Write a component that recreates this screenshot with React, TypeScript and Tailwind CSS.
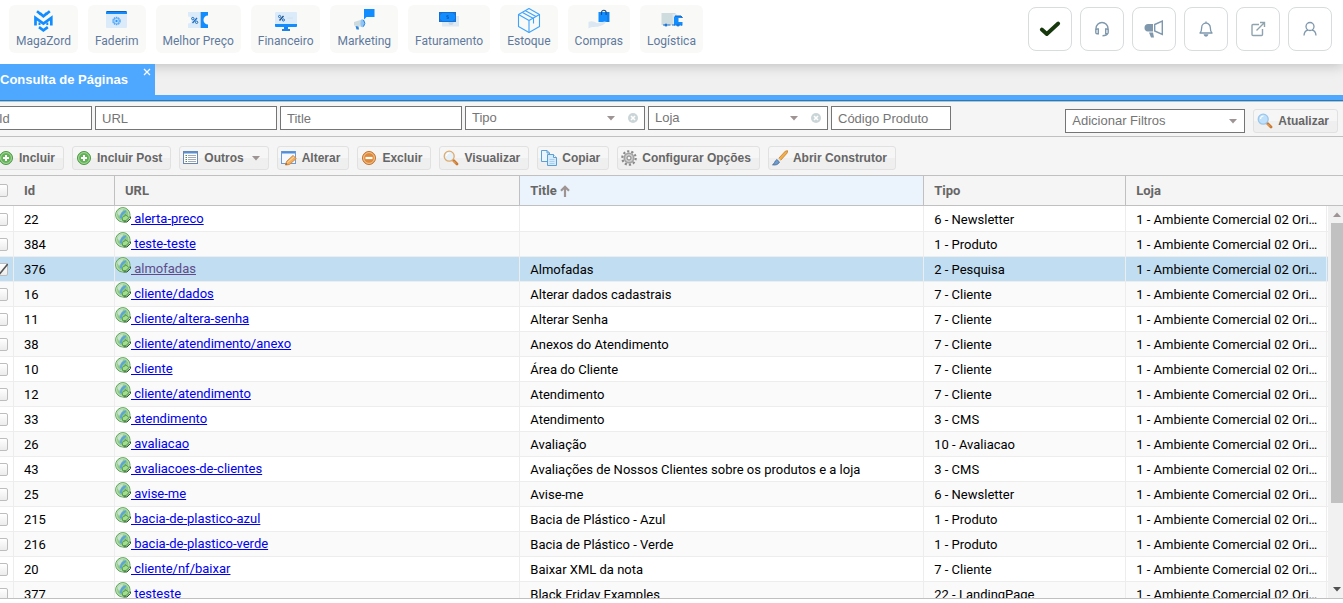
import React, { useState } from "react";

type IconProps = { className?: string };

/* ---------- module icons ---------- */

const MagazordIcon = () => (
  <svg width="32" height="26" viewBox="0 0 32 26" fill="none" stroke="#118dff" strokeWidth="2.700">
    <path d="M10 3.200 L13.800 6.200 M22.800 3.200 L19 6.200" />
    <path d="M13 5.400 L16.400 8.200 L19.800 5.400" />
    <path d="M8.500 17.500 V9.800 L16.400 15.500 L24.300 9.800 V17.500" />
    <path d="M12.500 17 V14.500 M20.300 17 V14.500" strokeWidth="2" />
    <path d="M12 19.200 L16.400 22.300 L20.800 19.200" />
  </svg>
);

const FaderimIcon = () => (
  <svg width="32" height="26" viewBox="0 0 32 26" fill="none">
    <rect x="5" y="3" width="21" height="17" rx="1" fill="#dcebf9" />
    <path d="M5 6 V4 a1 1 0 0 1 1-1 H25 a1 1 0 0 1 1 1 V6Z" fill="#118dff" />
    <path d="M6 3.500 H25" stroke="#1d5fae" />
    <circle cx="15.500" cy="13" r="3.500" stroke="#4aa5fb" strokeWidth="1.500" strokeDasharray="1.600 .6" />
    <circle cx="15.500" cy="13" r="2.600" stroke="#6db6fb" />
    <circle cx="15.500" cy="13" r="1.200" fill="#2b96ff" />
  </svg>
);

const PrecoIcon = () => (
  <svg width="32" height="26" viewBox="0 0 32 26" fill="none">
    <path d="M6 4 H19 V20 H6 V15.500 a3.500 3.500 0 0 0 0-7Z" fill="#dcebf9" />
    <path d="M18.500 4 V20" stroke="#a9c4dc" />
    <path d="M19 4 H26 V7.500 a4.500 4.500 0 0 0 0 9 V20 H19Z" fill="#118dff" />
    <path d="M15 10 L10.500 15" stroke="#1d6fc4" strokeWidth="1.300" />
    <circle cx="10.800" cy="10.600" r="1.200" stroke="#1d6fc4" />
    <circle cx="14.600" cy="14.300" r="1.200" stroke="#1d6fc4" />
  </svg>
);

const FinanceiroIcon = () => (
  <svg width="32" height="26" viewBox="0 0 32 26" fill="none">
    <rect x="5" y="4" width="22" height="15" rx="1" fill="#dcebf9" />
    <path d="M5 16 H27 V18 a1 1 0 0 1-1 1 H6 a1 1 0 0 1-1-1Z" fill="#118dff" />
    <path d="M14 19 H18 V21 H20 V23 H12 V21 H14Z" fill="#1c83e6" />
    <path d="M13.500 8 L9.500 12.500" stroke="#1d4f86" strokeWidth="1.300" />
    <circle cx="9.600" cy="8.500" r="1.100" stroke="#1d6fc4" />
    <circle cx="13.400" cy="12" r="1.100" stroke="#1d6fc4" />
    <path d="M17.500 10 H23" stroke="#cfe0ef" />
  </svg>
);

const MarketingIcon = () => (
  <svg width="32" height="26" viewBox="0 0 32 26" fill="none">
    <path d="M16 1 H26.500 V9 H18.500 L16 11.500Z" fill="#118dff" />
    <path d="M6 14 L14 11.500 V19 L6 17.500Z" fill="#cddbdf" />
    <ellipse cx="14.500" cy="15.300" rx="2" ry="4" fill="#8ec4f5" />
    <path d="M15.500 12 a5 5 0 0 1 0 6.500" stroke="#1c83e6" />
    <path d="M7.500 18 L8.500 21.500 H11 L10.500 18.500Z" fill="#2a86dd" />
  </svg>
);

const FaturamentoIcon = () => (
  <svg width="32" height="26" viewBox="0 0 32 26" fill="none">
    <rect x="9" y="8" width="17" height="10.500" fill="#dfe9f3" />
    <circle cx="18" cy="14.500" r="2.500" fill="#c7d6e6" />
    <rect x="6.500" y="4.500" width="16" height="9" fill="#118dff" stroke="#1b6dca" />
    <path d="M6.500 7 L9 4.500 M20 4.500 L22.500 7 M6.500 11 L9 13.500 M20 13.500 L22.500 11" stroke="#1b6dca" />
    <path d="M15.500 7.700 h-1.700 v1.300 h1.700 v1.400 h-1.800" stroke="#1457a5" strokeWidth=".8" />
  </svg>
);

const EstoqueIcon = () => (
  <svg width="32" height="26" viewBox="0 0 32 26" fill="none" stroke="#3fa3fb" strokeWidth="1.100" strokeLinejoin="round">
    <path d="M16 .6 L26.500 6.500 V18.500 L16 24.400 L5.500 18.500 V6.500Z" />
    <path d="M5.500 6.500 L16 12.500 L26.500 6.500 M16 12.500 V24.400" />
    <path d="M9.500 4.500 L20.500 10.500 V15.500 M12.500 2.700 L23 8.500" />
  </svg>
);

const ComprasIcon = () => (
  <svg width="32" height="26" viewBox="0 0 32 26" fill="none">
    <rect x="15.500" y="4" width="11" height="10" fill="#118dff" />
    <path d="M25 4 V14" stroke="#1b6dca" />
    <path d="M18.500 7 V4.500 a2.300 2.300 0 0 1 4.600 0 V7" stroke="#184a85" strokeWidth="1.100" />
    <path d="M5.500 14 C9 12.500 11 14 14 15 L22 13.500 C24 13.500 22 16.500 17 18 C13 19.500 9 18 5.500 20.500Z" fill="#dbe7f2" />
  </svg>
);

const LogisticaIcon = () => (
  <svg width="32" height="26" viewBox="0 0 32 26" fill="none">
    <rect x="5.500" y="5" width="14" height="12" fill="#cfdcdf" />
    <path d="M16.500 6 H21 L19.500 16 H17" fill="#dce9f5" />
    <path d="M19 8 H25 L26.500 10 H22.500 V14 H26.500 V17.500 H18 V9Z" fill="#118dff" />
    <path d="M19 8 H25 L26.500 10" stroke="#1b5fb0" />
    <path d="M7 17 H26" stroke="#1b6dca" strokeDasharray="3 1.500" />
    <circle cx="10" cy="17" r="1.500" fill="#1b78d8" />
    <circle cx="22" cy="17" r="1.500" fill="#1b78d8" />
  </svg>
);

/* ---------- toolbar icons ---------- */

const AddIcon = () => (
  <svg width="16" height="16" viewBox="0 0 16 16">
    <circle cx="8" cy="8" r="6.500" fill="#63b257" stroke="#4c9a42" />
    <circle cx="8" cy="8" r="5.400" fill="none" stroke="#a8dba0" />
    <path d="M8 5 V11 M5 8 H11" stroke="#fff" strokeWidth="2" />
  </svg>
);

const RemoveIcon = () => (
  <svg width="16" height="16" viewBox="0 0 16 16">
    <circle cx="8" cy="8" r="6.500" fill="#de8a3c" stroke="#c0732f" />
    <circle cx="8" cy="8" r="5.400" fill="none" stroke="#f3c795" />
    <path d="M4.500 8 H11.500" stroke="#fff" strokeWidth="2.200" />
  </svg>
);

const ListIcon = () => (
  <svg width="16" height="16" viewBox="0 0 16 16">
    <rect x=".5" y="1.500" width="14" height="12" fill="#fff" stroke="#6b87ad" />
    <path d="M1 2.500 H14" stroke="#5b8fd0" strokeWidth="2" />
    <path d="M2.500 5.500 H4 M2.500 7.500 H4 M2.500 9.500 H4 M2.500 11.500 H4" stroke="#4f8a5b" />
    <path d="M5 5.500 H13 M5 7.500 H13 M5 9.500 H13 M5 11.500 H13" stroke="#a2abb5" />
  </svg>
);

const EditIcon = () => (
  <svg width="16" height="16" viewBox="0 0 16 16">
    <rect x=".5" y="1.500" width="14" height="12" fill="#f4f9ff" stroke="#6f9bd1" />
    <path d="M1 2.500 H14" stroke="#4f8fdc" strokeWidth="2" />
    <path d="M4.500 15 L5.500 11.500 L12 5.500 L15.300 8.500 L8.500 14.500Z" fill="#f3ad5c" stroke="#d28a42" />
    <path d="M6.500 12.500 L13 6.800" stroke="#ffe0ac" />
    <path d="M4.500 15 L5 13 L6.500 14.300Z" fill="#8a5a30" />
  </svg>
);

const MagnifierIcon = ({ warm = false }: { warm?: boolean }) => (
  <svg width="16" height="16" viewBox="0 0 16 16">
    <path d="M10.500 10.500 L14 14" stroke="#c9792f" strokeWidth="2.800" strokeLinecap="round" />
    <path d="M10.500 11 L13 13.500" stroke="#efb06c" />
    <circle cx="6.200" cy="6.200" r="5" fill={warm ? "#e6f1fa" : "#bfe0fa"} stroke={warm ? "#dfab6d" : "#9cc6ea"} strokeWidth="1.300" />
    <path d="M3.500 6 a3 3 0 0 1 3-3" fill="none" stroke="#fff" strokeWidth="1.200" />
  </svg>
);

const CopyIcon = () => (
  <svg width="16" height="16" viewBox="0 0 16 16" stroke="#5b9fd4">
    <path d="M.5 .5 H6 L8.500 3 V11.500 H.5Z" fill="#eaf5fd" />
    <path d="M6 .5 V3 H8.500" fill="none" />
    <path d="M6.500 4.500 H12.500 L15.500 7.500 V15.500 H6.500Z" fill="#d5eafa" />
    <path d="M12.500 4.500 V7.500 H15.500" fill="#fff" />
    <path d="M8.500 9.500 H13.500 M8.500 11.500 H13.500 M8.500 13.500 H13.500" stroke="#a9d1ef" />
  </svg>
);

const GearIcon = () => (
  <svg width="16" height="16" viewBox="0 0 16 16" fill="none">
    <circle cx="8" cy="8" r="6.700" stroke="#8a8a8a" strokeWidth="2.200" strokeDasharray="2.200 2.010" />
    <circle cx="8" cy="8" r="4.700" fill="#cbcbcb" stroke="#a3a3a3" strokeWidth="1.600" />
    <circle cx="8" cy="8" r="2" fill="#f5f5f5" stroke="#858585" />
  </svg>
);

const BrushIcon = () => (
  <svg width="16" height="16" viewBox="0 0 16 16">
    <path d="M6.500 8.500 L13.500 1 L15.800 .8 L15 3.200 L8.500 10.500Z" fill="#f2b04c" stroke="#c57e29" strokeWidth=".8" />
    <path d="M5.500 8.800 L8.200 11.200" stroke="#e9e9e9" strokeWidth="2" />
    <path d="M.5 14.800 C2.500 14 2.500 11 4.800 9.500 L7.500 12 C6.500 14.500 3.500 15.500 .5 14.800Z" fill="#6b9bd0" stroke="#41668f" strokeWidth=".8" />
  </svg>
);

const GlobeIcon = () => (
  <svg width="16" height="16" viewBox="0 0 16 16">
    <circle cx="7.800" cy="7.800" r="7.200" fill="#8fc98a" stroke="#5fa65b" />
    <circle cx="7.800" cy="7.800" r="6.200" fill="none" stroke="#c9e8c2" strokeWidth=".9" />
    <path d="M2.500 6 C4 2.800 6.500 2 8.500 2.500 L6.500 5.500 L4 9Z" fill="#c7e3cf" />
    <path d="M11.500 3.500 C9 3.200 6 5.500 5.500 8 L4.500 10.500 L7 12 L7.200 8.500 L10.500 5.500Z" fill="#5ba3da" />
    <path d="M7.500 13.500 V11.500 C7.500 9.800 8.500 9 10.200 9 V7.500 L14 10.500 L11 13.500Z" fill="#a5dd8e" stroke="#4f9a48" strokeWidth=".9" />
    <path d="M15.500 9.500 V11.500 L12 15 H8.500" fill="none" stroke="#2c5a2b" />
  </svg>
);

/* ---------- header action icons ---------- */

const CheckIcon = () => (
  <svg width="22" height="18" viewBox="0 0 22 18" fill="none">
    <path d="M2.800 9.500 L7.800 14 L19.200 3.500" stroke="#17380c" strokeWidth="3.800" strokeLinejoin="round" strokeLinecap="round" />
  </svg>
);

const HeadsetIcon = () => (
  <svg width="18" height="18" viewBox="0 0 18 18" fill="none" stroke="#7f98ae" strokeWidth="1.400">
    <path d="M3 10 V8.500 a6 6 0 0 1 12 0 V10" />
    <path d="M5.300 9 H4 a1.200 1.200 0 0 0-1.200 1.200 V12.500 a1.200 1.200 0 0 0 1.200 1.200 H5.300Z" />
    <path d="M12.700 9 H14 a1.200 1.200 0 0 1 1.200 1.200 V12.500 a1.200 1.200 0 0 1-1.200 1.200 H12.700Z" />
    <path d="M14.500 13.500 C14 15.200 12.500 15.700 9.500 15.700" />
  </svg>
);

const MegaphoneIcon = () => (
  <svg width="20" height="20" viewBox="0 0 20 20" fill="none">
    <path d="M9 5 H4.500 a3.500 3.500 0 0 0-.5 7.500 H9Z" fill="#7f98ae" />
    <path d="M5 13.500 H9 L10 18.500 H7Z" fill="#7f98ae" />
    <path d="M10.700 5.500 L18.300 2 V15.500 L10.700 12Z" stroke="#7f98ae" strokeWidth="1.400" />
  </svg>
);

const BellIcon = () => (
  <svg width="18" height="18" viewBox="0 0 18 18" fill="none" stroke="#7f98ae" strokeWidth="1.300">
    <path d="M3 13 C4.500 11.500 4.700 10 4.700 7.500 a4.300 4.300 0 0 1 8.600 0 C13.300 10 13.500 11.500 15 13Z" strokeLinejoin="round" />
    <path d="M9 1.500 V3" />
    <path d="M7.500 15 a1.600 1.600 0 0 0 3 0Z" fill="#7f98ae" />
  </svg>
);

const ExternalIcon = () => (
  <svg width="18" height="18" viewBox="0 0 18 18" fill="none" stroke="#8fa3ae" strokeWidth="1.400">
    <path d="M10 4.500 H4 a1 1 0 0 0-1 1 V14.500 a1 1 0 0 0 1 1 H12.500 a1 1 0 0 0 1-1 V9" />
    <path d="M7.500 10.500 L15 3 M11 2.500 H15.500 V7" />
  </svg>
);

const UserIcon = () => (
  <svg width="18" height="18" viewBox="0 0 18 18" fill="none" stroke="#7f98ae" strokeWidth="1.300">
    <circle cx="9" cy="6.500" r="4" />
    <path d="M3 15.500 C3.200 12.500 4.500 10.500 7 10 M15 15.500 C14.800 12.500 13.500 10.500 11 10" />
  </svg>
);

const Caret = ({ className = "" }: IconProps) => (
  <svg className={className} width="8" height="5" viewBox="0 0 8 5">
    <path d="M0 0 H8 L4 4.500Z" fill="#9e9494" />
  </svg>
);

const modules = [
  { label: "MagaZord", icon: <MagazordIcon /> },
  { label: "Faderim", icon: <FaderimIcon /> },
  { label: "Melhor Preço", icon: <PrecoIcon /> },
  { label: "Financeiro", icon: <FinanceiroIcon /> },
  { label: "Marketing", icon: <MarketingIcon /> },
  { label: "Faturamento", icon: <FaturamentoIcon /> },
  { label: "Estoque", icon: <EstoqueIcon /> },
  { label: "Compras", icon: <ComprasIcon /> },
  { label: "Logística", icon: <LogisticaIcon /> },
];

const actions = [
  { label: "Status", icon: <CheckIcon /> },
  { label: "Suporte", icon: <HeadsetIcon /> },
  { label: "Novidades", icon: <MegaphoneIcon /> },
  { label: "Notificações", icon: <BellIcon /> },
  { label: "Abrir loja", icon: <ExternalIcon /> },
  { label: "Usuário", icon: <UserIcon /> },
];

const tools = [
  { label: "Incluir", icon: <AddIcon /> },
  { label: "Incluir Post", icon: <AddIcon /> },
  { label: "Outros", icon: <ListIcon />, menu: true },
  { label: "Alterar", icon: <EditIcon /> },
  { label: "Excluir", icon: <RemoveIcon /> },
  { label: "Visualizar", icon: <MagnifierIcon warm /> },
  { label: "Copiar", icon: <CopyIcon /> },
  { label: "Configurar Opções", icon: <GearIcon /> },
  { label: "Abrir Construtor", icon: <BrushIcon /> },
];

const loja = "1 - Ambiente Comercial 02 Ori…";

const rows: [string, string, string, string][] = [
  ["22", "alerta-preco", "", "6 - Newsletter"],
  ["384", "teste-teste", "", "1 - Produto"],
  ["376", "almofadas", "Almofadas", "2 - Pesquisa"],
  ["16", "cliente/dados", "Alterar dados cadastrais", "7 - Cliente"],
  ["11", "cliente/altera-senha", "Alterar Senha", "7 - Cliente"],
  ["38", "cliente/atendimento/anexo", "Anexos do Atendimento", "7 - Cliente"],
  ["10", "cliente", "Área do Cliente", "7 - Cliente"],
  ["12", "cliente/atendimento", "Atendimento", "7 - Cliente"],
  ["33", "atendimento", "Atendimento", "3 - CMS"],
  ["26", "avaliacao", "Avaliação", "10 - Avaliacao"],
  ["43", "avaliacoes-de-clientes", "Avaliações de Nossos Clientes sobre os produtos e a loja", "3 - CMS"],
  ["25", "avise-me", "Avise-me", "6 - Newsletter"],
  ["215", "bacia-de-plastico-azul", "Bacia de Plástico - Azul", "1 - Produto"],
  ["216", "bacia-de-plastico-verde", "Bacia de Plástico - Verde", "1 - Produto"],
  ["20", "cliente/nf/baixar", "Baixar XML da nota", "7 - Cliente"],
  ["377", "testeste", "Black Friday Examples", "22 - LandingPage"],
];

function FilterInput({ label, width }: { label: string; width: string }) {
  return (
    <input
      aria-label={label}
      placeholder={label}
      className={`h-6 rounded-none border border-[#757575] bg-white px-1.5 font-['Liberation_Sans',sans-serif] text-[13px] outline-none placeholder:text-[#757575] ${width}`}
    />
  );
}

function FilterSelect({ label, clearable = false }: { label: string; clearable?: boolean }) {
  return (
    <div className="relative w-[180px]">
      <select
        aria-label={label}
        className="block h-6 w-full appearance-none rounded-none border border-[#757575] bg-white px-1.5 font-['Liberation_Sans',sans-serif] text-[13px] text-[#757575] outline-none"
      >
        <option>{label}</option>
      </select>
      <Caret className={`pointer-events-none absolute top-2.5 ${clearable ? "right-[30px]" : "right-2"}`} />
      {clearable && (
        <button
          type="button"
          aria-label={`Limpar ${label}`}
          className="absolute top-[7px] right-[7px] h-2.5 w-2.5 rounded-full bg-[#cbd5d8]"
        >
          <svg width="10" height="10" viewBox="0 0 10 10">
            <path d="M3 3 L7 7 M7 3 L3 7" stroke="#fff" strokeWidth="1.600" />
          </svg>
        </button>
      )}
    </div>
  );
}

function ToolButton({ label, icon, menu = false }: { label: string; icon: React.ReactNode; menu?: boolean }) {
  return (
    <button
      type="button"
      className="flex h-6 items-center gap-[5px] rounded-[3px] border border-[#e1e1e1] bg-linear-to-b from-[#f6f6f6] from-50% to-[#efefef] to-50% pr-2 pl-[3px] font-['Liberation_Sans',sans-serif] text-xs font-bold whitespace-nowrap text-[#666]"
    >
      {icon}
      <span>{label}</span>
      {menu && <Caret className="ml-[3px]" />}
    </button>
  );
}

function GridCheckbox({ label, checked, onChange }: { label: string; checked: boolean; onChange: () => void }) {
  return (
    <label className="relative ml-[3px] block h-[13px] w-[13px]">
      <input
        type="checkbox"
        aria-label={label}
        checked={checked}
        onChange={onChange}
        className="block h-[13px] w-[13px] appearance-none rounded-[2px] border border-[#bdbdbd] bg-linear-to-b from-white to-[#ececec]"
      />
      {checked && (
        <svg className="pointer-events-none absolute inset-0" width="13" height="13" viewBox="0 0 13 13">
          <path d="M2 6 L5 10.500 L12.800 1" fill="none" stroke="#555" strokeWidth="1.700" />
        </svg>
      )}
    </label>
  );
}

export default function App() {
  const [selected, setSelected] = useState<string[]>(["376"]);
  const toggle = (id: string) =>
    setSelected((s) => (s.includes(id) ? s.filter((x) => x !== id) : [...s, id]));

  return (
    <div className="flex h-screen flex-col overflow-hidden bg-white pb-1 font-[Roboto,'Liberation_Sans',sans-serif] text-[13px] text-black">
      <header className="z-10 flex h-16 shrink-0 items-start justify-between bg-white pr-[11px] pl-[9px] shadow-[0_2px_12px_rgba(0,0,0,0.2)]">
        <nav className="flex gap-2.5 pt-[5px]">
          {modules.map((m) => (
            <button
              key={m.label}
              type="button"
              className="flex h-12 flex-col items-center rounded-md bg-[#f9f9f8] px-[7px] pt-[3px] text-xs text-[#5f7a9d]"
            >
              {m.icon}
              <span className="leading-[14px]">{m.label}</span>
            </button>
          ))}
        </nav>
        <div className="flex gap-2 pt-[7px]">
          {actions.map((a) => (
            <button
              key={a.label}
              type="button"
              aria-label={a.label}
              className="flex h-11 w-11 items-center justify-center rounded-lg border border-[#d7dcdd] bg-white"
            >
              {a.icon}
            </button>
          ))}
        </div>
      </header>

      <div className="-ml-2 flex min-h-0 flex-1 flex-col">
        <div className="flex h-[31px] shrink-0 bg-[#f0f0f0]">
          <div className="relative z-20 flex w-[163px] items-center bg-[#4fa8ff] pl-2 font-['Liberation_Sans',sans-serif] font-bold text-white">
            Consulta de Páginas
            <button type="button" aria-label="Fechar aba" className="absolute top-1 right-1">
              <svg width="8" height="8" viewBox="0 0 8 8">
                <path d="M1 1 L7 7 M7 1 L1 7" stroke="#fff" strokeWidth="1.200" />
              </svg>
            </button>
          </div>
        </div>
        <div className="h-[7px] shrink-0 border-t-[5px] border-b border-t-[#4fa8ff] border-b-[#c0c0c0] bg-[#157fcc]" />

        <div className="flex h-[35px] shrink-0 items-start justify-between border-b border-[#c0c0c0] bg-[#f5f5f5] pr-[5px]">
          <div className="flex gap-[3px] pt-1">
            <FilterInput label="Id" width="w-[100px]" />
            <FilterInput label="URL" width="w-[182px]" />
            <FilterInput label="Title" width="w-[182px]" />
            <FilterSelect label="Tipo" clearable />
            <FilterSelect label="Loja" clearable />
            <FilterInput label="Código Produto" width="w-[120px]" />
          </div>
          <div className="flex gap-2 pt-[7px]">
            <FilterSelect label="Adicionar Filtros" />
            <ToolButton label="Atualizar" icon={<MagnifierIcon />} />
          </div>
        </div>

        <div className="flex h-[39px] shrink-0 items-center gap-2 border-b border-[#c0c0c0] bg-[#f5f5f5] pt-1 pl-0.5">
          {tools.map((t) => (
            <ToolButton key={t.label} {...t} />
          ))}
        </div>

        <div className="relative min-h-0 flex-1 overflow-hidden border-b border-[#c0c0c0]">
          <table className="w-full table-fixed border-separate border-spacing-0">
            <colgroup>
              <col className="w-[22px]" />
              <col className="w-[101px]" />
              <col className="w-[30%]" />
              <col className="w-[29.9%]" />
              <col className="w-[14.95%]" />
              <col />
              <col className="w-4" />
            </colgroup>
            <thead>
              <tr className="h-[30px] bg-[#f5f5f5] text-left text-[#666] [&>th]:border-b [&>th]:border-[#c0c0c0] [&>th]:p-0">
                <th>
                  <GridCheckbox
                    label="Selecionar todos"
                    checked={selected.length === rows.length}
                    onChange={() => setSelected((s) => (s.length === rows.length ? [] : rows.map((r) => r[0])))}
                  />
                </th>
                <th className="border-r">
                  <span className="pl-2.5">Id</span>
                </th>
                <th className="border-r">
                  <span className="pl-2.5">URL</span>
                </th>
                <th className="border-r bg-[#ebf4fc]">
                  <span className="flex items-center gap-[3px] pl-2.5">
                    Title
                    <svg width="10" height="12" viewBox="0 0 10 12" fill="none" stroke="#9e9494" strokeWidth="2.200">
                      <path d="M5 12 V2 M1 5.800 L5 1.800 L9 5.800" />
                    </svg>
                  </span>
                </th>
                <th className="border-r">
                  <span className="pl-2.5">Tipo</span>
                </th>
                <th>
                  <span className="pl-2.5">Loja</span>
                </th>
                <th />
              </tr>
            </thead>
            <tbody>
              {rows.map(([id, url, title, tipo], i) => {
                const on = selected.includes(id);
                const tone = on ? "bg-[#c1ddf1]" : i % 2 ? "bg-[#fafafa]" : "bg-white";
                return (
                  <tr
                    key={id}
                    className={`${i === 0 ? "h-[26px]" : "h-[25px]"} ${tone} [&>td]:border-r [&>td]:border-b [&>td]:border-[#ededed] [&>td]:p-0`}
                  >
                    <td>
                      <div className="pt-px">
                        <GridCheckbox label={`Selecionar ${id}`} checked={on} onChange={() => toggle(id)} />
                      </div>
                    </td>
                    <td>
                      <div className="pt-0.5 pl-2.5">{id}</div>
                    </td>
                    <td className="align-bottom">
                      <a href={`#${url}`} className={`flex h-6 leading-6 ${on ? "text-[#5f4b8b]" : "text-[#0000ee]"}`}>
                        <GlobeIcon />
                        <span className="whitespace-pre underline">{" " + url}</span>
                      </a>
                    </td>
                    <td>
                      <div className="truncate px-2.5 pt-0.5">{title}</div>
                    </td>
                    <td>
                      <div className="truncate px-2.5 pt-0.5">{tipo}</div>
                    </td>
                    <td>
                      <div className="pt-0.5 pl-2.5 whitespace-nowrap">{loja}</div>
                    </td>
                    <td />
                  </tr>
                );
              })}
            </tbody>
          </table>

          <div className="absolute top-[30px] right-0 bottom-0 flex w-[15px] flex-col items-end bg-[#f1f1f1]">
            <button type="button" aria-label="Rolar para cima" className="flex h-[17px] w-3 shrink-0 items-center justify-center">
              <Caret className="rotate-180" />
            </button>
            <div className="h-[71.5%] w-3 bg-[#c1c1c1]" />
            <button type="button" aria-label="Rolar para baixo" className="mt-auto flex h-[17px] w-3 shrink-0 items-center justify-center">
              <svg width="8" height="5" viewBox="0 0 8 5">
                <path d="M0 0 H8 L4 4.500Z" fill="#505050" />
              </svg>
            </button>
          </div>
        </div>
      </div>
    </div>
  );
}
